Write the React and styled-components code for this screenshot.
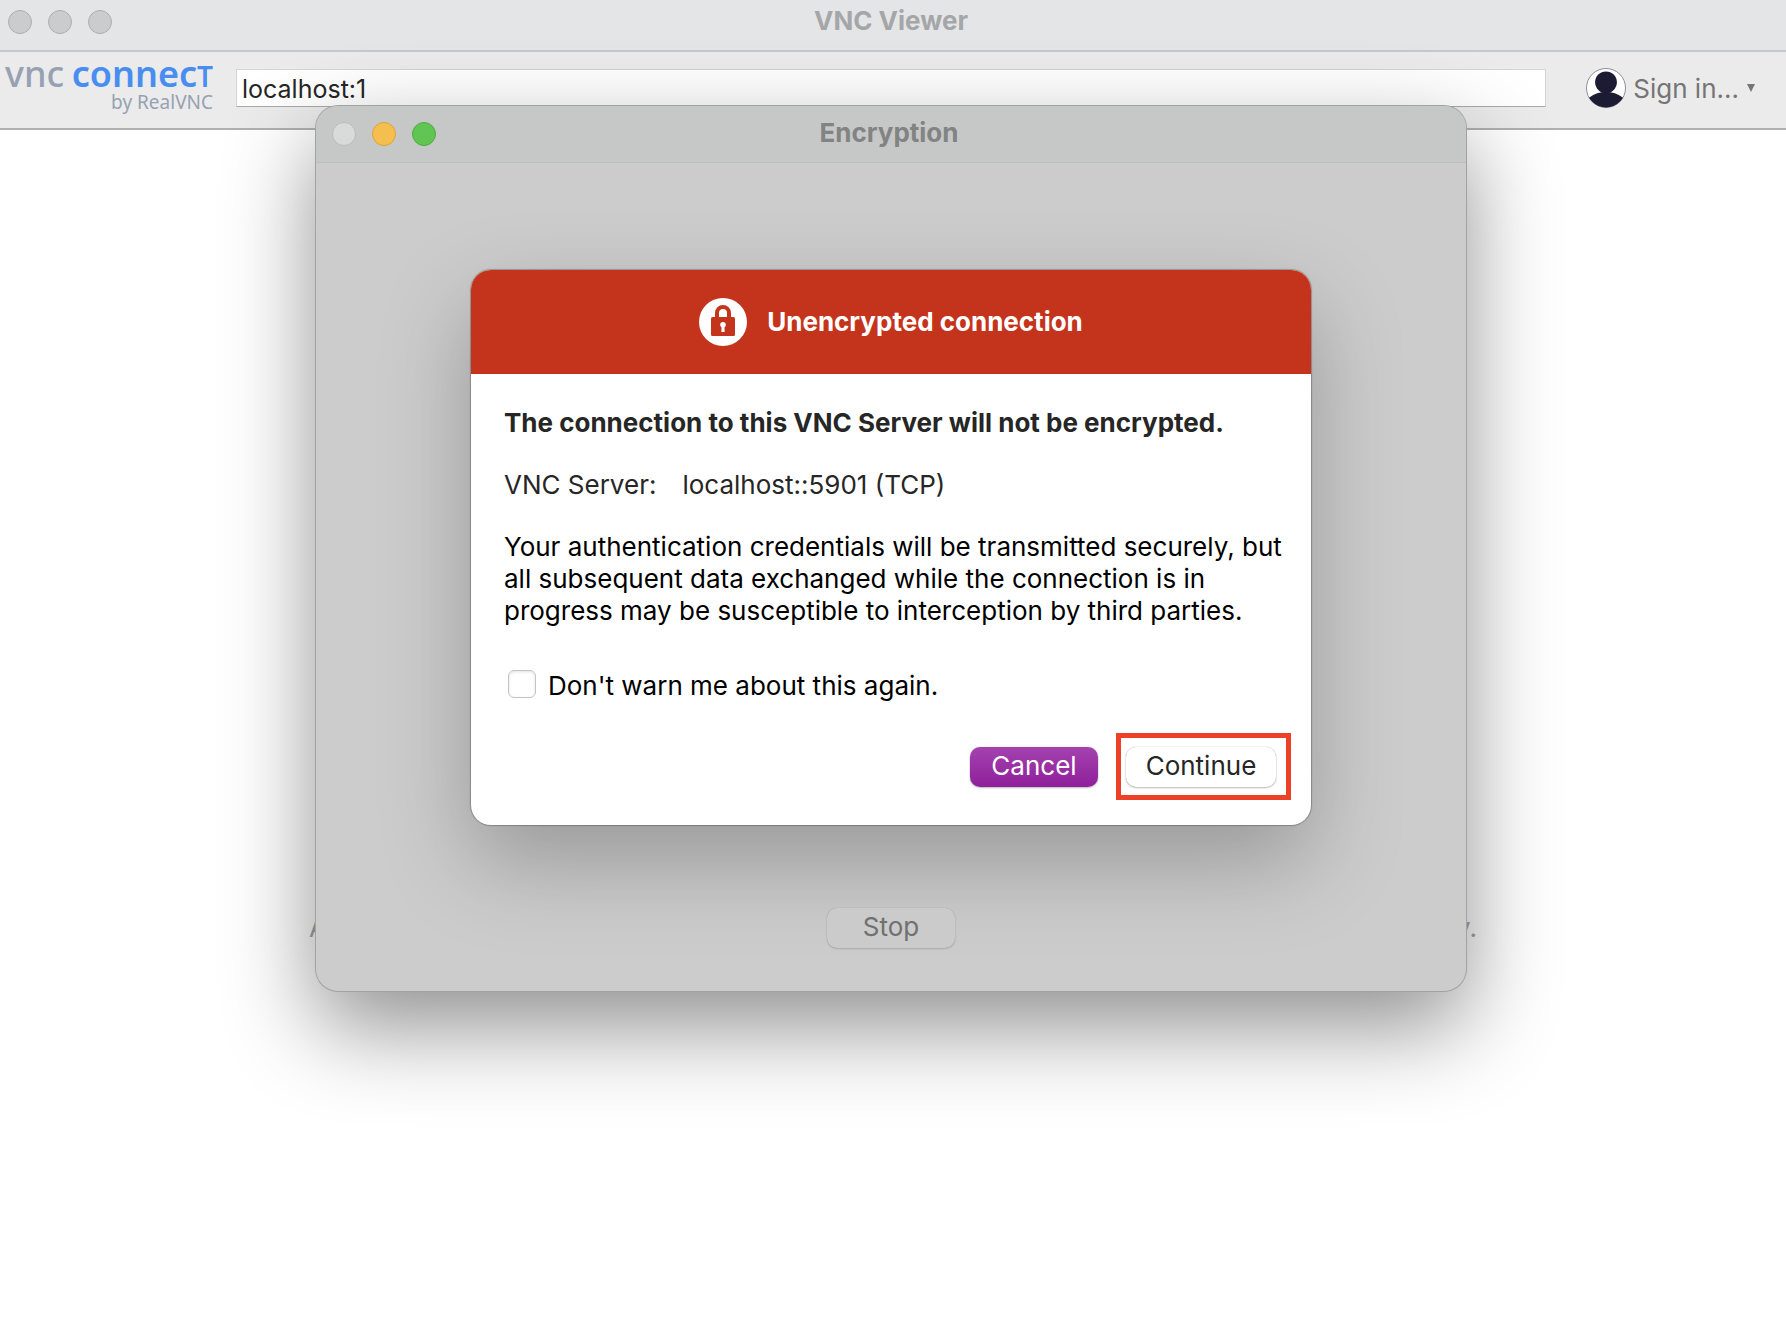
import React from "react";
import styled, { createGlobalStyle } from "styled-components";

const Global = createGlobalStyle`
  *, *::before, *::after { box-sizing: border-box; }
  body {
    margin: 0;
    background: #fff;
    color: #262626;
    font-family: Inter, "Liberation Sans", sans-serif;
    font-size: 26px;
    line-height: 32px;
  }
  button, input { font: inherit; }
  h1, h2, h3, p, dl, dd { margin: 0; font-size: inherit; }
`;

const Viewer = styled.div`
  position: relative;
  min-height: 100vh;
  overflow: hidden;
  background: #fff;
`;

const TitleBar = styled.header`
  display: grid;
  grid-template-columns: 1fr auto 1fr;
  align-items: center;
  height: ${(p) => p.$height}px;
  padding: 0 ${(p) => p.$inset + 4}px ${(p) => p.$base}px ${(p) => p.$inset}px;
  background: ${(p) => p.$background};
  border-bottom: ${(p) => p.$line}px solid ${(p) => p.$lineColor};
`;

const Title = styled.h1`
  padding-bottom: 2px;
  color: ${(p) => p.$color};
  font-weight: 700;
`;

const Lights = styled.div`
  display: flex;
  gap: 16px;
`;

const Light = styled.button`
  width: 24px;
  height: 24px;
  padding: 0;
  border: 1px solid ${(p) => p.$edge};
  border-radius: 50%;
  background: ${(p) => p.$fill};
`;

const Toolbar = styled.div`
  display: flex;
  align-items: flex-start;
  height: 78px;
  padding: 8px 31px 0 5px;
  background: #ebebeb;
  border-bottom: 2px solid #b0b0b0;
`;

const Logo = styled.div`
  flex: none;
  width: 208px;
  margin-right: 23px;
  font-family: "Noto Sans", "Open Sans", sans-serif;
  color: #97a1b3;
`;

const Wordmark = styled.div`
  display: flex;
  align-items: baseline;
  justify-content: space-between;
  font-size: 36px;
  font-weight: 500;
  line-height: 28px;
`;

const Brand = styled.span`
  color: #4a8df0;
  font-weight: 600;
`;

const SmallCap = styled.span`
  font-size: 28px;
`;

const Byline = styled.div`
  font-size: 19px;
  line-height: 24px;
  text-align: right;
`;

const Address = styled.input`
  flex: 1;
  min-width: 0;
  height: 38px;
  margin: 9px 40px 0 0;
  padding: 2px 5px 0;
  border: 1px solid #d4d4d4;
  border-bottom: 1px solid #a9a9a9;
  border-radius: 0;
  background: #fff;
  color: #262626;
  font-size: 25px;
  outline: none;
`;

const SignIn = styled.button`
  display: flex;
  align-items: center;
  flex: none;
  margin-top: 8px;
  padding: 0;
  border: 0;
  background: none;
  color: #757575;
`;

const SignInText = styled.span`
  margin: 0 8px 0 7px;
  padding-top: 2px;
`;

const Notice = styled.p`
  display: flex;
  justify-content: space-between;
  max-width: 1168px;
  margin: 782px auto 0;
  color: #a6a6a6;
`;

const Desktop = styled.div`
  position: absolute;
  inset: 0;
  display: flex;
  align-items: flex-start;
  justify-content: center;
  padding: 106px 4px 0 0;
`;

const Window = styled.section`
  width: 1150px;
  max-width: 100%;
  overflow: hidden;
  border-radius: 22px;
  background: #ccc;
  box-shadow: 0 0 0 1px #a2a2a2, 0 36px 90px rgba(0, 0, 0, 0.44);
`;

const WindowBody = styled.div`
  display: flex;
  flex-direction: column;
  align-items: center;
  gap: 83px;
  padding: 107px 20px 43px;
`;

const Dialog = styled.section`
  width: 840px;
  max-width: 100%;
  border-radius: 20px;
  background: #fff;
  box-shadow: 0 0 1px 1px rgba(0, 0, 0, 0.25), 0 36px 90px rgba(0, 0, 0, 0.26);
`;

const Banner = styled.header`
  display: flex;
  align-items: center;
  justify-content: center;
  gap: 20px;
  height: 104px;
  border-radius: 20px 20px 0 0;
  background: #c4331c;
  color: #fff;
`;

const DialogBody = styled.div`
  display: flex;
  flex-direction: column;
  gap: 30px;
  padding: 33px 20px 0 33px;
`;

const Server = styled.dl`
  display: flex;
  gap: 26px;
`;

const Message = styled.p`
  color: #000;
`;

const Option = styled.label`
  display: flex;
  align-items: flex-start;
  gap: 12px;
  margin-top: 13px;
  padding-left: 4px;
  color: #000;
`;

const Check = styled.input`
  appearance: none;
  width: 28px;
  height: 28px;
  margin: 0;
  border: 1px solid #c4c4c4;
  border-radius: 6px;
  background: #fff;
  box-shadow: inset 0 1px 3px rgba(0, 0, 0, 0.12);
`;

const Actions = styled.footer`
  display: flex;
  align-items: center;
  justify-content: flex-end;
  gap: 18px;
  padding: 31px 20px 25px;
`;

const Button = styled.button`
  width: ${(p) => p.$width}px;
  height: 40px;
  padding: 0 0 2px;
  border: 0;
  border-radius: 10px;
  background: ${(p) => p.$background};
  color: ${(p) => p.$color};
  box-shadow: 0 0 1px rgba(0, 0, 0, ${(p) => (p.$faded ? 0.2 : 0.35)}),
    0 1px 2px rgba(0, 0, 0, ${(p) => (p.$faded ? 0.15 : 0.25)});
`;

const Highlight = styled.div`
  display: flex;
  padding: 9px 10px 8px 5px;
  border: 5px solid #ec4127;
`;

function Avatar() {
  return (
    <svg width="40" height="40" viewBox="0 0 40 40" aria-hidden="true">
      <clipPath id="face">
        <circle cx="20" cy="20" r="19.5" />
      </clipPath>
      <circle cx="20" cy="20" r="19.5" fill="#fff" stroke="#8d8d9c" />
      <g clipPath="url(#face)" fill="#1b1b33">
        <circle cx="20" cy="14.3" r="10.9" />
        <ellipse cx="20" cy="42" rx="23" ry="18" />
      </g>
    </svg>
  );
}

function Lock() {
  return (
    <svg width="48" height="48" viewBox="0 0 48 48" aria-hidden="true">
      <circle cx="24" cy="24" r="24" fill="#fff" />
      <path d="M18 21v-6a6 6 0 0 1 12 0v6" fill="none" stroke="#c4331c" strokeWidth="4" />
      <rect x="12" y="19" width="24" height="19" rx="1.5" fill="#c4331c" />
      <circle cx="24" cy="26.8" r="2.8" fill="#fff" />
      <path d="M22.8 27h2.4l.5 7h-3.4z" fill="#fff" />
    </svg>
  );
}

const idle = { $fill: "#cbcccd", $edge: "#adaeb0" };

export default function App() {
  return (
    <Viewer>
      <Global />
      <TitleBar
        $height={52}
        $inset={8}
        $base={6}
        $background="#e4e5e7"
        $line={2}
        $lineColor="#c6c7c8"
      >
        <Lights>
          <Light aria-label="Close" {...idle} />
          <Light aria-label="Minimize" {...idle} />
          <Light aria-label="Zoom" {...idle} />
        </Lights>
        <Title $color="#a5a6a8">VNC Viewer</Title>
      </TitleBar>
      <Toolbar>
        <Logo>
          <Wordmark>
            <span>vnc</span>
            <Brand>
              connec<SmallCap>T</SmallCap>
            </Brand>
          </Wordmark>
          <Byline>by RealVNC</Byline>
        </Logo>
        <Address type="text" aria-label="Address" defaultValue="localhost:1" />
        <SignIn type="button">
          <Avatar />
          <SignInText>Sign in...</SignInText>
          <svg width="8" height="8" viewBox="0 0 8 8" aria-hidden="true">
            <path d="M0 0h8L4 8z" fill="#757575" />
          </svg>
        </SignIn>
      </Toolbar>
      <Notice>
        <span>A</span>
        <span>y.</span>
      </Notice>

      <Desktop>
        <Window>
          <TitleBar
            $height={57}
            $inset={16}
            $base={0}
            $background="#c6c8c7"
            $line={1}
            $lineColor="#bcbdbd"
          >
            <Lights>
              <Light aria-label="Close" $fill="#d9dbda" $edge="#b9bbba" />
              <Light aria-label="Minimize" $fill="#f5bf4f" $edge="#dca136" />
              <Light aria-label="Zoom" $fill="#61c554" $edge="#4eab3f" />
            </Lights>
            <Title as="h2" $color="#828383">Encryption</Title>
          </TitleBar>
          <WindowBody>
            <Dialog role="alertdialog" aria-labelledby="warning">
              <Banner>
                <Lock />
                <h3 id="warning">Unencrypted connection</h3>
              </Banner>
              <DialogBody>
                <strong>The connection to this VNC Server will not be encrypted.</strong>
                <Server>
                  <dt>VNC Server:</dt>
                  <dd>localhost::5901 (TCP)</dd>
                </Server>
                <Message>
                  Your authentication credentials will be transmitted securely, but all
                  subsequent data exchanged while the connection is in progress may be
                  susceptible to interception by third parties.
                </Message>
                <Option>
                  <Check type="checkbox" />
                  Don't warn me about this again.
                </Option>
              </DialogBody>
              <Actions>
                <Button $width={128} $background="linear-gradient(#a442ae, #8f1f9b)" $color="#fff">
                  Cancel
                </Button>
                <Highlight>
                  <Button $width={150} $background="#fff" $color="#262626">
                    Continue
                  </Button>
                </Highlight>
              </Actions>
            </Dialog>
            <Button $width={128} $background="#cbcbcb" $color="#707070" $faded>
              Stop
            </Button>
          </WindowBody>
        </Window>
      </Desktop>
    </Viewer>
  );
}
